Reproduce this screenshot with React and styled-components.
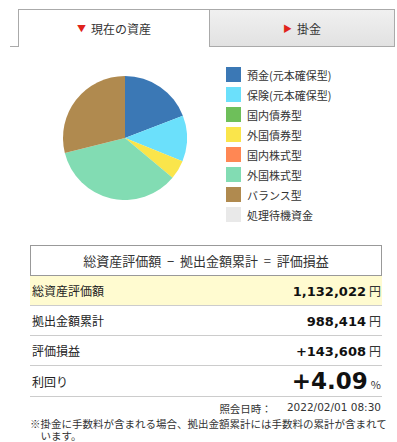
import React from 'react';
import styled, { createGlobalStyle } from 'styled-components';

const GlobalStyle = createGlobalStyle`
  body {
    margin: 0;
    background: #fff;
    font-family: "Noto Sans CJK JP", "Liberation Sans", sans-serif;
    color: #333;
  }
`;

const slices = [
  { name: '預金(元本確保型)', color: '#3b78b5', deg: 69 },
  { name: '保険(元本確保型)', color: '#6be0fb', deg: 43 },
  { name: '国内債券型', color: '#6ebf5a', deg: 0 },
  { name: '外国債券型', color: '#fae54b', deg: 18 },
  { name: '国内株式型', color: '#ff8754', deg: 0 },
  { name: '外国株式型', color: '#82dcb3', deg: 126 },
  { name: 'バランス型', color: '#b08a4f', deg: 104 },
  { name: '処理待機資金', color: '#e9e9e9', deg: 0 },
];

const rows = [
  { label: '総資産評価額', value: '1,132,022', unit: '円', hl: true },
  { label: '拠出金額累計', value: '988,414', unit: '円' },
  { label: '評価損益', value: '+143,608', unit: '円' },
  { label: '利回り', value: '+4.09', unit: '%', big: true },
];

const Page = styled.div`
  width: 397px;
`;

const TabBar = styled.div`
  display: flex;
  margin: 9px 2px 0 10px;
  padding-left: 8px;
  border-bottom: 1px solid #aaa;
`;

const Tab = styled.div`
  display: flex;
  align-items: center;
  justify-content: center;
  gap: 5px;
  font-size: 12px;
  color: #333;
  border: 1px solid #aaa;
  border-bottom: none;
  margin-bottom: ${p => (p.active ? '-1px' : '0')};
  height: ${p => (p.active ? '37px' : '36px')};
  width: ${p => (p.active ? '190px' : 'auto')};
  flex: ${p => (p.active ? 'none' : '1')};
  border-right: ${p => (p.active ? 'none' : '1px solid #aaa')};
  background: ${p => (p.active ? '#fff' : 'linear-gradient(#f0f0f0, #e2e2e2)')};
`;

const Arrow = styled.span`
  color: #e0231c;
  font-size: 9px;
  line-height: 1;
`;

const ChartArea = styled.div`
  display: flex;
  align-items: flex-start;
  padding: 20px 0 0 63px;
  height: 178px;
`;

const Pie = styled.svg`
  margin-top: 9px;
  flex: none;
`;

const Legend = styled.ul`
  list-style: none;
  margin: 0 0 0 39px;
  padding: 0;
  display: flex;
  flex-direction: column;
  gap: 5px;
`;

const LegendItem = styled.li`
  display: flex;
  align-items: center;
  gap: 6px;
  height: 15px;
  font-size: 11px;
  color: #333;
`;

const Swatch = styled.span`
  width: 15px;
  height: 15px;
  background: ${p => p.color};
`;

const Summary = styled.div`
  margin: 0 15px 0 30px;
`;

const Formula = styled.div`
  border: 1px solid #999;
  height: 29px;
  display: flex;
  align-items: center;
  justify-content: center;
  font-size: 13px;
  color: #333;
  white-space: pre;
`;

const Row = styled.div`
  display: flex;
  align-items: center;
  justify-content: space-between;
  padding: 0 1px 0 2px;
  border-bottom: 1px solid #ccc;
  background: ${p => (p.hl ? '#fffbd0' : '#fff')};
  height: ${p => (p.big ? '30px' : '29px')};
`;

const Label = styled.span`
  font-size: 12px;
  color: #222;
`;

const Value = styled.span`
  display: flex;
  align-items: baseline;
  gap: 3px;
  font-family: "DejaVu Sans", "Noto Sans CJK JP", sans-serif;
  font-weight: bold;
  color: #111;
  font-size: ${p => (p.big ? '23px' : '13px')};
`;

const Unit = styled.span`
  font-family: "Noto Sans CJK JP", sans-serif;
  font-weight: normal;
  font-size: ${p => (p.big ? '11px' : '12px')};
  color: #333;
`;

const Stamp = styled.div`
  display: flex;
  justify-content: flex-end;
  gap: 15px;
  margin: 4px 16px 0 0;
  font-size: 10.5px;
  color: #333;
`;

const StampDate = styled.span`
  font-family: "DejaVu Sans", sans-serif;
  font-size: 10.5px;
`;

const Note = styled.p`
  margin: 2px 4px 0 30px;
  padding-left: 10.5px;
  text-indent: -10.5px;
  font-size: 10.5px;
  line-height: 12px;
  color: #333;
`;

function PieChart() {
  const r = 62;
  let start = 0;
  const paths = [];
  slices.forEach(s => {
    if (!s.deg) return;
    const end = start + s.deg;
    const a0 = (start * Math.PI) / 180;
    const a1 = (end * Math.PI) / 180;
    const x0 = r + r * Math.sin(a0);
    const y0 = r - r * Math.cos(a0);
    const x1 = r + r * Math.sin(a1);
    const y1 = r - r * Math.cos(a1);
    const large = s.deg > 180 ? 1 : 0;
    paths.push(
      <path
        key={s.name}
        d={`M${r},${r} L${x0},${y0} A${r},${r} 0 ${large} 1 ${x1},${y1} Z`}
        fill={s.color}
      />
    );
    start = end;
  });
  return (
    <Pie width="124" height="124" viewBox="0 0 124 124">
      {paths}
    </Pie>
  );
}

export default function App() {
  return (
    <Page>
      <GlobalStyle />
      <TabBar>
        <Tab active>
          <Arrow>▼</Arrow>現在の資産
        </Tab>
        <Tab>
          <Arrow>▶</Arrow>掛金
        </Tab>
      </TabBar>

      <ChartArea>
        <PieChart />
        <Legend>
          {slices.map(s => (
            <LegendItem key={s.name}>
              <Swatch color={s.color} />
              {s.name}
            </LegendItem>
          ))}
        </Legend>
      </ChartArea>

      <Summary>
        <Formula>{'総資産評価額  −  拠出金額累計  =  評価損益'}</Formula>
        {rows.map(r => (
          <Row key={r.label} hl={r.hl} big={r.big}>
            <Label>{r.label}</Label>
            <Value big={r.big}>
              {r.value}
              <Unit big={r.big}>{r.unit}</Unit>
            </Value>
          </Row>
        ))}
      </Summary>

      <Stamp>
        <span>照会日時：</span>
        <StampDate>2022/02/01 08:30</StampDate>
      </Stamp>
      <Note>※掛金に手数料が含まれる場合、拠出金額累計には手数料の累計が含まれています。</Note>
    </Page>
  );
}
